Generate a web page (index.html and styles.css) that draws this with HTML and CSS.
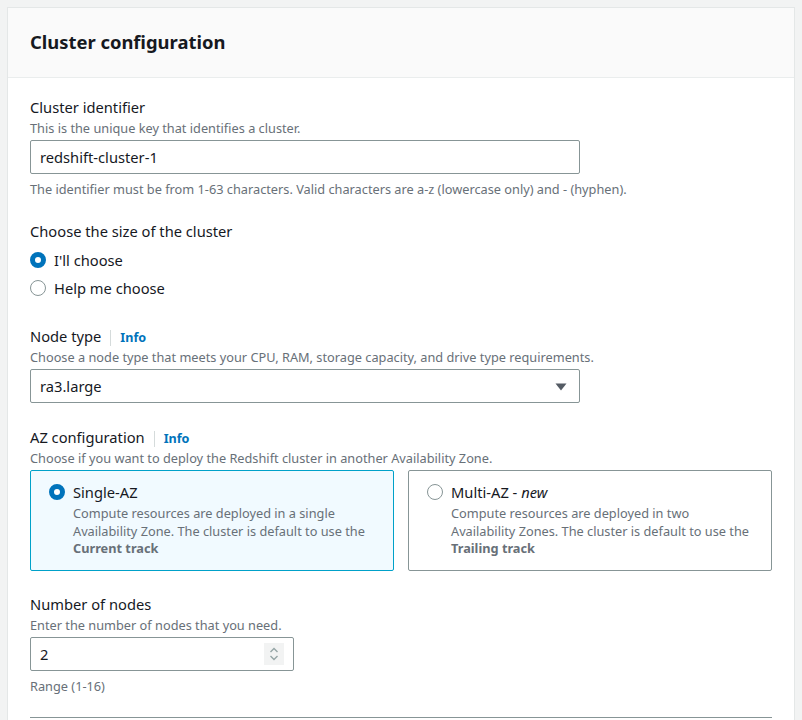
FILE: index.html
```html
<!DOCTYPE html>
<html>
<head>
<meta charset="utf-8">
<link rel="stylesheet" href="styles.css">
</head>
<body>
<div class="panel">
  <div class="panel-header">
    <h2 class="panel-title">Cluster configuration</h2>
  </div>
  <div class="panel-body">
    <div class="field field-id">
      <div class="label">Cluster identifier</div>
      <div class="desc">This is the unique key that identifies a cluster.</div>
      <div class="control wide"><span class="value">redshift-cluster-1</span></div>
      <div class="constraint">The identifier must be from 1-63 characters. Valid characters are a-z (lowercase only) and - (hyphen).</div>
    </div>

    <div class="field field-radio">
      <div class="label">Choose the size of the cluster</div>
      <div class="radio-group">
        <div class="radio-row"><span class="radio checked"></span><span class="radio-label">I'll choose</span></div>
        <div class="radio-row"><span class="radio"></span><span class="radio-label">Help me choose</span></div>
      </div>
    </div>

    <div class="field field-node">
      <div class="label">Node type<span class="info">Info</span></div>
      <div class="desc">Choose a node type that meets your CPU, RAM, storage capacity, and drive type requirements.</div>
      <div class="control wide select">
        <span class="value">ra3.large</span>
        <svg class="caret" width="12" height="8" viewBox="0 0 12 8"><path d="M0.5 0.5 H11.5 L6 7.5 Z" fill="#545b64"/></svg>
      </div>
    </div>

    <div class="field field-az">
      <div class="label">AZ configuration<span class="info">Info</span></div>
      <div class="desc">Choose if you want to deploy the Redshift cluster in another Availability Zone.</div>
      <div class="tiles">
        <div class="tile selected">
          <span class="radio checked"></span>
          <div class="tile-text">
            <div class="tile-title">Single-AZ</div>
            <div class="tile-desc">Compute resources are deployed in a single Availability Zone. The cluster is default to use the <b>Current track</b></div>
          </div>
        </div>
        <div class="tile">
          <span class="radio"></span>
          <div class="tile-text">
            <div class="tile-title">Multi-AZ - <i>new</i></div>
            <div class="tile-desc">Compute resources are deployed in two Availability Zones. The cluster is default to use the <b>Trailing track</b></div>
          </div>
        </div>
      </div>
    </div>

    <div class="field field-nodes">
      <div class="label">Number of nodes</div>
      <div class="desc">Enter the number of nodes that you need.</div>
      <div class="control narrow">
        <span class="value">2</span>
        <span class="spinner">
          <svg width="12" height="18" viewBox="0 0 12 18"><path d="M2.5 7 L6 3.5 L9.5 7" fill="none" stroke="#95a5a6" stroke-width="1.4"/><path d="M2.5 11 L6 14.5 L9.5 11" fill="none" stroke="#95a5a6" stroke-width="1.4"/></svg>
        </span>
      </div>
      <div class="constraint">Range (1-16)</div>
    </div>

    <div class="divider"></div>
  </div>
</div>
</body>
</html>
```

FILE: styles.css
```css
html, body {
  margin: 0;
  padding: 0;
}
body {
  background: #f2f3f3;
  padding: 8px;
  font-family: "Noto Sans", "Open Sans", sans-serif;
  color: #16191f;
  height: 704px;
  overflow: hidden;
}
.panel {
  background: #ffffff;
  box-shadow: 0 0 0 1px #e4e7e7;
  min-height: 760px;
}
.panel-header {
  background: #fafafa;
  border-bottom: 1px solid #eaeded;
  padding: 23px 22px 24px 22px;
}
.panel-title {
  margin: 0;
  font-size: 18.4px;
  line-height: 22px;
  font-weight: 700;
  color: #16191f;
}
.panel-body {
  padding: 18px 22px 0 22px;
}
.field {
  margin-bottom: 22px;
}
.field-id {
  margin-bottom: 23px;
}
.field-radio {
  margin-bottom: 23px;
}
.field-node {
  margin-bottom: 23px;
}
.field-az {
  margin-bottom: 22px;
}
.field-nodes {
  margin-bottom: 23px;
}
.label {
  font-size: 14.7px;
  line-height: 22px;
  display: flex;
  align-items: baseline;
}
.info {
  font-size: 12.6px;
  font-weight: 700;
  color: #0073bb;
  border-left: 1px solid #d5dbdb;
  margin-left: 9px;
  padding-left: 9px;
  line-height: 16px;
}
.desc {
  font-size: 12.75px;
  line-height: 16px;
  color: #687078;
  margin-top: 2px;
}
.constraint {
  font-size: 12.75px;
  line-height: 16px;
  color: #687078;
  margin-top: 7px;
}
.control {
  box-sizing: border-box;
  height: 34px;
  border: 1px solid #879596;
  border-radius: 2px;
  margin-top: 4px;
  display: flex;
  align-items: center;
  padding: 0 9px;
  font-size: 14.7px;
  color: #16191f;
  background: #fff;
}
.wide {
  width: 550px;
}
.narrow {
  width: 264px;
}
.value {
  flex: 1;
}
.caret {
  margin-right: 3px;
  margin-top: 1px;
}
.spinner {
  width: 20px;
  height: 22px;
  background: #f2f3f3;
  display: flex;
  align-items: center;
  justify-content: center;
}
.radio-group {
  margin-top: 4px;
  display: flex;
  flex-direction: column;
}
.radio-row {
  height: 28px;
  display: flex;
  align-items: center;
  font-size: 14.7px;
}
.radio {
  box-sizing: border-box;
  width: 16px;
  height: 16px;
  border-radius: 50%;
  border: 1.5px solid #879596;
  background: #fff;
  flex: none;
}
.radio.checked {
  border: 5px solid #0073bb;
}
.radio-label {
  margin-left: 8px;
}
.tiles {
  display: grid;
  grid-template-columns: 1fr 1fr;
  gap: 14px;
  margin-top: 4px;
}
.tile {
  box-sizing: border-box;
  height: 101px;
  border: 1px solid #879596;
  border-radius: 2px;
  padding: 11px 17px 0 18px;
  display: flex;
  align-items: flex-start;
}
.tile.selected {
  background: #f1faff;
  border-color: #00a1c9;
}
.tile .radio {
  margin-top: 2px;
}
.tile-text {
  margin-left: 8px;
}
.tile-title {
  font-size: 14.7px;
  line-height: 20px;
}
.tile-desc {
  font-size: 12.75px;
  line-height: 17.5px;
  color: #687078;
  margin-top: 3px;
}
.tile-desc b {
  font-weight: 700;
}
.divider {
  border-top: 1px solid #879596;
  padding-top: 10px;
}
```
